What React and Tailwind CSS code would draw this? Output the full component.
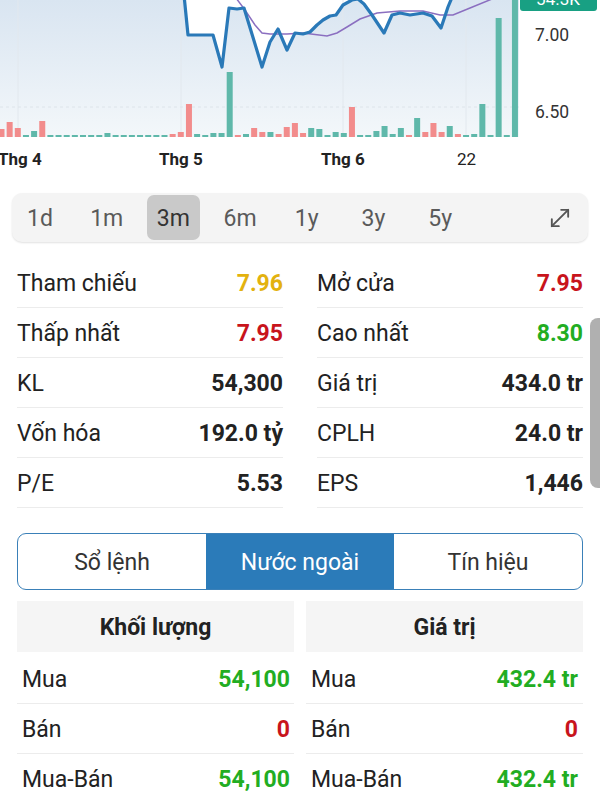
import { MoveDiagonal } from "lucide-react";

const bars = [
  [8, "r"], [15, "r"], [9, "r"], [2, "g"], [6, "g"], [16, "r"], [2, "g"], [2, "g"],
  [2, "g"], [2, "g"], [2, "g"], [2, "g"], [2, "g"], [4, "g"], [2, "g"], [2, "g"],
  [2, "g"], [2, "g"], [2, "g"], [2, "g"], [2, "g"], [3, "r"], [5, "r"], [33, "r"],
  [3, "g"], [2, "g"], [4, "g"], [4, "g"], [65, "g"], [2, "r"], [3, "g"], [9, "r"],
  [5, "r"], [5, "g"], [3, "r"], [10, "r"], [14, "r"], [4, "r"], [9, "g"], [8, "g"],
  [2, "g"], [5, "g"], [4, "g"], [30, "r"], [2, "g"], [2, "g"], [6, "g"], [11, "g"],
  [3, "g"], [9, "g"], [2, "r"], [19, "g"], [5, "r"], [14, "r"], [5, "r"], [11, "g"],
  [3, "r"], [2, "g"], [3, "g"], [33, "g"], [2, "g"], [119, "g"], [2, "g"], [140, "g"],
];

const price = [
  [184, -5], [188, 35], [213, 35], [222, 67], [229, 8], [237, 9], [244, 8], [262, 67],
  [270, 42], [278, 29], [287, 50], [295, 33], [303, 34], [310, 32], [317, 25], [323, 20],
  [330, 16], [336, 15], [343, 5], [352, 0], [358, -1], [364, 4], [372, 15], [384, 33],
  [392, 15], [400, 13], [410, 15], [423, 13], [432, 16], [441, 28], [448, 7], [453, -5],
];

const ma = [
  [236, -2], [245, 10], [255, 25], [262, 33], [270, 34], [287, 34], [303, 33], [327, 36],
  [337, 33], [347, 27], [360, 19], [377, 13], [400, 11], [423, 11], [440, 15], [453, 15],
  [470, 8], [492, -1],
];

const pts = (a) => a.map(([x, y]) => `${x},${y}`).join(" ");

const stats = [
  ["Tham chiếu", "7.96", "text-[#e3b20f]", "Mở cửa", "7.95", "text-[#c8141c]"],
  ["Thấp nhất", "7.95", "text-[#c8141c]", "Cao nhất", "8.30", "text-[#22ad22]"],
  ["KL", "54,300", "text-[#222]", "Giá trị", "434.0 tr", "text-[#222]"],
  ["Vốn hóa", "192.0 tỷ", "text-[#222]", "CPLH", "24.0 tr", "text-[#222]"],
  ["P/E", "5.53", "text-[#222]", "EPS", "1,446", "text-[#222]"],
];

function Chart() {
  return (
    <svg width="600" height="176" viewBox="0 0 600 176" className="block">
      <defs>
        <linearGradient id="bg" x1="0" y1="0" x2="0" y2="1">
          <stop offset="0" stopColor="#d9e5f1" />
          <stop offset="1" stopColor="#f3f7fa" />
        </linearGradient>
        <clipPath id="plot">
          <rect x="0" y="0" width="519" height="137" />
        </clipPath>
      </defs>
      <g clipPath="url(#plot)">
        <rect x="0" y="0" width="519" height="137" fill="url(#bg)" />
        <polygon points={pts(price)} fill="#ffffff" />
        {[18, 181, 343, 466].map((x) => (
          <line key={x} x1={x} y1="0" x2={x} y2="137" stroke="#e2e8ee" strokeWidth="1" />
        ))}
        <line x1="0" y1="107" x2="519" y2="107" stroke="#dde4ea" strokeDasharray="3 3" />
        {bars.map(([h, c], i) => (
          <rect
            key={i}
            x={-1.5 + i * 8.15}
            y={137 - h}
            width="6"
            height={h}
            fill={c === "r" ? "#f28c8c" : "#5fb8aa"}
          />
        ))}
        <polyline points={pts(ma)} fill="none" stroke="#8b6fc0" strokeWidth="1.5" />
        <polyline
          points={pts(price)}
          fill="none"
          stroke="#2a79b8"
          strokeWidth="3.2"
          strokeLinejoin="round"
        />
      </g>
      <rect x="520" y="-14" width="77" height="25" rx="3" fill="#18a083" />
      <text x="558" y="5" textAnchor="middle" fill="#fff" fontSize="17" fontFamily="Roboto, sans-serif">
        54.3K
      </text>
      <g fontFamily="Roboto, sans-serif" fontSize="17.5" fill="#333">
        <text x="535" y="41">7.00</text>
        <text x="535" y="118">6.50</text>
      </g>
      <g fontFamily="Roboto, sans-serif" fontSize="17" fill="#222">
        <text x="-2" y="165" fontWeight="700">Thg 4</text>
        <text x="159" y="165" fontWeight="700">Thg 5</text>
        <text x="321" y="165" fontWeight="700">Thg 6</text>
        <text x="457" y="165">22</text>
      </g>
    </svg>
  );
}

export default function App() {
  return (
    <div className="relative w-[600px] h-[800px] overflow-hidden bg-white font-['Roboto',sans-serif] text-[#222]">
      <Chart />

      {/* Period selector */}
      <div className="mx-[12px] mt-[17px] h-[49px] flex items-center rounded-[10px] bg-[#f4f4f4] shadow-[0_1px_2px_rgba(0,0,0,0.12)]">
        <div className="flex items-center gap-[13.7px] pl-[1.5px]">
          {["1d", "1m", "3m", "6m", "1y", "3y", "5y"].map((p) => (
            <div
              key={p}
              className={`w-[53px] h-[45px] flex items-center justify-center pt-[3px] rounded-[7px] text-[23px] ${
                p === "3m" ? "bg-[#c9c9c9] text-[#333]" : "text-[#5a5a5a]"
              }`}
            >
              {p}
            </div>
          ))}
        </div>
        <MoveDiagonal className="ml-auto mr-[14px] w-[28px] h-[28px] text-[#555]" strokeWidth={1.6} />
      </div>

      {/* Stats */}
      <div className="mt-[16px] px-[17px] grid grid-cols-2 gap-x-[34px]">
        {stats.map(([l1, v1, c1, l2, v2, c2]) => (
          <div key={l1} className="contents">
            <div className="h-[50px] flex items-center justify-between pt-[3px] border-b border-[#ececec] text-[23px]">
              <span>{l1}</span>
              <span className={`font-bold ${c1}`}>{v1}</span>
            </div>
            <div className="h-[50px] flex items-center justify-between pt-[3px] border-b border-[#ececec] text-[23px]">
              <span>{l2}</span>
              <span className={`font-bold ${c2}`}>{v2}</span>
            </div>
          </div>
        ))}
      </div>

      {/* Tabs */}
      <div className="mx-[17px] mt-[25px] h-[57px] flex rounded-[9px] border-[1.5px] border-[#3a80b8] overflow-hidden text-[23px]">
        <div className="flex-1 flex items-center justify-center pt-[3px] text-[#333]">Sổ lệnh</div>
        <div className="flex-1 flex items-center justify-center pt-[3px] bg-[#2b7bb9] text-white">Nước ngoài</div>
        <div className="flex-1 flex items-center justify-center pt-[3px] text-[#333]">Tín hiệu</div>
      </div>

      {/* Foreign trading */}
      <div className="mt-[11px] px-[17px] grid grid-cols-2 gap-x-[12px]">
        <div className="h-[51px] mb-[2px] flex items-center justify-center pt-[3px] bg-[#f5f5f5] font-bold text-[23px]">Khối lượng</div>
        <div className="h-[51px] mb-[2px] flex items-center justify-center pt-[3px] bg-[#f5f5f5] font-bold text-[23px]">Giá trị</div>
        {[
          ["Mua", "54,100", "432.4 tr", "text-[#22ad22]"],
          ["Bán", "0", "0", "text-[#c8141c]"],
          ["Mua-Bán", "54,100", "432.4 tr", "text-[#22ad22]"],
        ].map(([l, a, b, c]) => (
          <div key={l} className="contents">
            <div className="h-[50px] flex items-center justify-between pt-[4px] pl-[5px] pr-[4px] border-b border-[#ececec] text-[23px]">
              <span>{l}</span>
              <span className={`font-bold ${c}`}>{a}</span>
            </div>
            <div className="h-[50px] flex items-center justify-between pt-[4px] pl-[5px] pr-[5px] border-b border-[#ececec] text-[23px]">
              <span>{l}</span>
              <span className={`font-bold ${c}`}>{b}</span>
            </div>
          </div>
        ))}
      </div>

      {/* Scrollbar overlay */}
      <div className="absolute right-0 top-[318px] w-[10px] h-[170px] rounded-l-[8px] bg-[#9c9c9c]/80" />
    </div>
  );
}
